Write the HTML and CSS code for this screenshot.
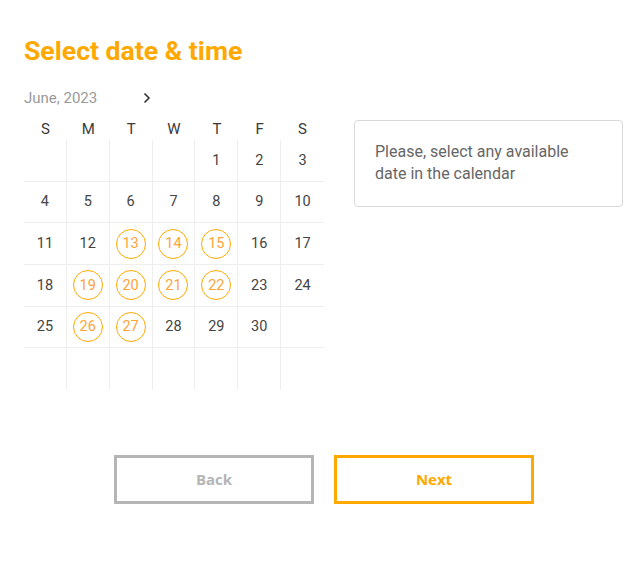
FILE: index.html
```html
<!DOCTYPE html>
<html>
<head>
<meta charset="utf-8">
<link rel="stylesheet" href="styles.css">
</head>
<body>
<div class="page">
  <h1 class="title">Select date &amp; time</h1>
  <div class="main">
    <div class="calendar">
      <div class="month-row">
        <span class="month">June, 2023</span>
        <svg class="chev" width="8" height="12" viewBox="0 0 8 12"><path d="M1.5 1.5 L6 6 L1.5 10.5" fill="none" stroke="#333" stroke-width="1.6"/></svg>
      </div>
      <div class="weekdays">
        <span>S</span><span>M</span><span>T</span><span>W</span><span>T</span><span>F</span><span>S</span>
      </div>
      <div class="grid">
        <div class="cell"></div><div class="cell"></div><div class="cell"></div><div class="cell"></div><div class="cell">1</div><div class="cell">2</div><div class="cell">3</div>
        <div class="cell">4</div><div class="cell">5</div><div class="cell">6</div><div class="cell">7</div><div class="cell">8</div><div class="cell">9</div><div class="cell">10</div>
        <div class="cell">11</div><div class="cell">12</div><div class="cell"><span class="avail">13</span></div><div class="cell"><span class="avail">14</span></div><div class="cell"><span class="avail">15</span></div><div class="cell">16</div><div class="cell">17</div>
        <div class="cell">18</div><div class="cell"><span class="avail">19</span></div><div class="cell"><span class="avail">20</span></div><div class="cell"><span class="avail">21</span></div><div class="cell"><span class="avail">22</span></div><div class="cell">23</div><div class="cell">24</div>
        <div class="cell">25</div><div class="cell"><span class="avail">26</span></div><div class="cell"><span class="avail">27</span></div><div class="cell">28</div><div class="cell">29</div><div class="cell">30</div><div class="cell"></div>
        <div class="cell"></div><div class="cell"></div><div class="cell"></div><div class="cell"></div><div class="cell"></div><div class="cell"></div><div class="cell"></div>
      </div>
    </div>
    <div class="info">Please, select any available date in the calendar</div>
  </div>
  <div class="buttons">
    <button class="btn back">Back</button>
    <button class="btn next">Next</button>
  </div>
</div>
</body>
</html>
```

FILE: styles.css
```css
html, body {
  margin: 0;
  padding: 0;
  background: #fff;
}
body {
  font-family: Roboto, "Liberation Sans", sans-serif;
}
.page {
  width: 600px;
  padding: 34px 16px 0 24px;
}
.title {
  margin: 0;
  font-size: 26.6px;
  font-weight: 700;
  line-height: 34px;
  color: #ffa800;
}
.main {
  display: flex;
  gap: 30px;
  margin-top: 18px;
}
.calendar {
  width: 300px;
}
.month-row {
  display: flex;
  align-items: center;
  height: 24px;
  margin-bottom: 8px;
}
.month {
  font-size: 15px;
  color: #999;
  width: 119px;
}
.chev {
  display: block;
}
.weekdays {
  display: grid;
  grid-template-columns: repeat(7, 1fr);
  height: 22px;
  align-items: center;
  font-size: 15px;
  color: #3a3a3a;
  text-align: center;
}
.grid {
  display: grid;
  grid-template-columns: repeat(7, 1fr);
  grid-template-rows: repeat(6, 1fr);
  height: 250px;
}
.cell {
  display: flex;
  align-items: center;
  justify-content: center;
  font-size: 14.5px;
  color: #444;
  border-right: 1px solid #eeeeee;
  border-bottom: 1px solid #eeeeee;
}
.cell:nth-child(7n) {
  border-right: none;
}
.cell:nth-last-child(-n+7) {
  border-bottom: none;
}
.avail {
  display: flex;
  align-items: center;
  justify-content: center;
  width: 28px;
  height: 28px;
  border: 1px solid #ffa800;
  border-radius: 50%;
  color: #fda43a;
}
.info {
  margin-top: 34px;
  align-self: flex-start;
  width: 227px;
  padding: 20px 20px 21px 20px;
  border: 1px solid #d9d9d9;
  border-radius: 4px;
  font-size: 16px;
  line-height: 22px;
  color: #666;
}
.buttons {
  display: flex;
  justify-content: center;
  gap: 20px;
  margin-top: 65px;
}
.btn {
  width: 200px;
  height: 49px;
  background: #fff;
  border: 3px solid;
  font-family: "Open Sans", sans-serif;
  font-weight: 700;
  font-size: 15px;
  padding-bottom: 2px;
}
.back {
  border-color: #b5b5b5;
  color: #b5b5b5;
}
.next {
  border-color: #ffa800;
  color: #ffa800;
}
```
